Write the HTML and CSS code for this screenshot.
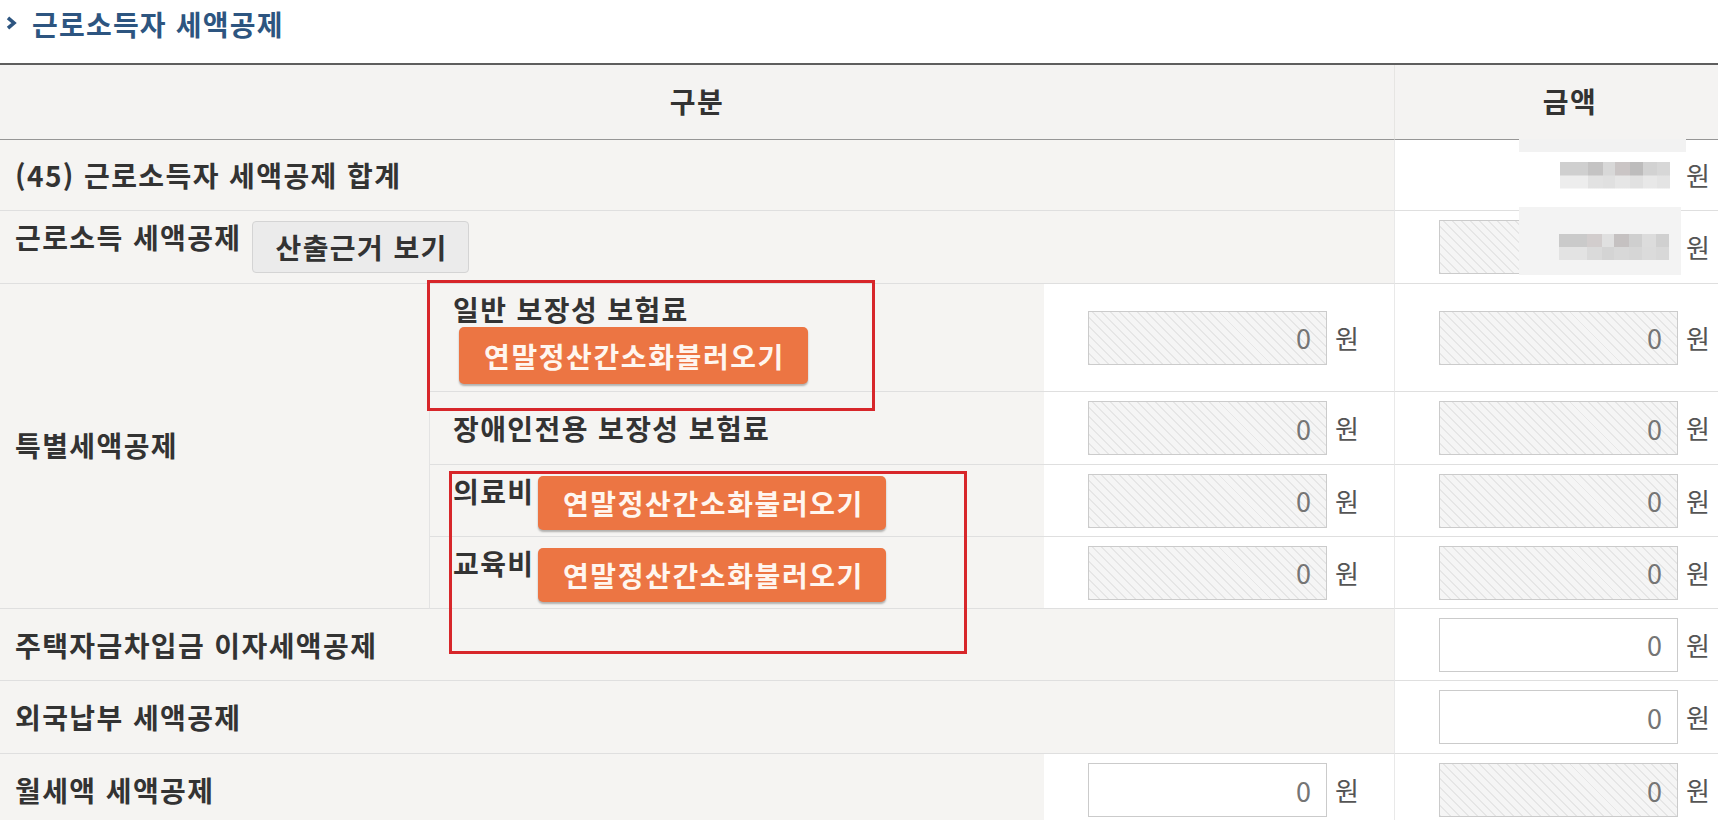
FILE: index.html
```html
<!DOCTYPE html>
<html lang="ko">
<head>
<meta charset="utf-8">
<title>근로소득자 세액공제</title>
<link rel="stylesheet" href="styles.css">
</head>
<body>
<div class="page">
  <h2 class="title"><svg class="chev" width="11" height="14" viewBox="0 0 11 14"><polyline points="2,1.8 8,7 2,12.2" fill="none" stroke="#2d5580" stroke-width="3.6"/></svg>근로소득자 세액공제</h2>
  <div class="tbl-wrap">
    <div class="grid">
      <div class="th span3">구분</div>
      <div class="th col-amt">금액</div>

      <div class="td label span3">(45) 근로소득자 세액공제 합계</div>
      <div class="td amt">
        <span class="patch patch1"></span>
        <span class="mosaic mosaic1"></span>
        <span class="won">원</span>
      </div>

      <div class="td label label-top span3">
        <span class="ltext">근로소득 세액공제</span>
        <button class="btn-gray" type="button">산출근거 보기</button>
      </div>
      <div class="td amt">
        <input class="inp hatch" type="text" value="" readonly>
        <span class="won">원</span>
        <span class="patch patch2"></span>
        <span class="mosaic mosaic2 over"></span>
      </div>

      <div class="td label special">특별세액공제</div>
      <div class="td sub sub-stack">
        <span class="ltext">일반 보장성 보험료</span>
        <button class="btn-orange btn-first" type="button">연말정산간소화불러오기</button>
      </div>
      <div class="td mid"><input class="inp hatch" type="text" value="0" readonly><span class="won">원</span></div>
      <div class="td amt"><input class="inp hatch" type="text" value="0" readonly><span class="won">원</span></div>

      <div class="td sub">장애인전용 보장성 보험료</div>
      <div class="td mid"><input class="inp hatch" type="text" value="0" readonly><span class="won">원</span></div>
      <div class="td amt"><input class="inp hatch" type="text" value="0" readonly><span class="won">원</span></div>

      <div class="td sub sub-row">
        <span class="ltext">의료비</span>
        <button class="btn-orange" type="button">연말정산간소화불러오기</button>
      </div>
      <div class="td mid"><input class="inp hatch" type="text" value="0" readonly><span class="won">원</span></div>
      <div class="td amt"><input class="inp hatch" type="text" value="0" readonly><span class="won">원</span></div>

      <div class="td sub sub-row">
        <span class="ltext">교육비</span>
        <button class="btn-orange" type="button">연말정산간소화불러오기</button>
      </div>
      <div class="td mid"><input class="inp hatch" type="text" value="0" readonly><span class="won">원</span></div>
      <div class="td amt"><input class="inp hatch" type="text" value="0" readonly><span class="won">원</span></div>

      <div class="td label span3">주택자금차입금 이자세액공제</div>
      <div class="td amt"><input class="inp" type="text" value="0" readonly><span class="won">원</span></div>

      <div class="td label span3">외국납부 세액공제</div>
      <div class="td amt"><input class="inp" type="text" value="0" readonly><span class="won">원</span></div>

      <div class="td label span2">월세액 세액공제</div>
      <div class="td mid"><input class="inp" type="text" value="0" readonly><span class="won">원</span></div>
      <div class="td amt"><input class="inp hatch" type="text" value="0" readonly><span class="won">원</span></div>
    </div>
    <div class="mark mark1"></div>
    <div class="mark mark2"></div>
  </div>
</div>
</body>
</html>
```

FILE: styles.css
```css
* { box-sizing: border-box; }

html, body {
  margin: 0;
  padding: 0;
}

body {
  width: 1718px;
  height: 820px;
  overflow: hidden;
  background: #ffffff;
  font-family: "Noto Sans CJK KR", "Noto Sans", sans-serif;
  color: #333333;
}

.page {
  width: 1718px;
  overflow: hidden;
}

.title {
  margin: 0;
  height: 63px;
  display: flex;
  align-items: flex-start;
  padding: 7px 0 0 6px;
  font-size: 28px;
  line-height: 34px;
  font-weight: 700;
  letter-spacing: 1.2px;
  color: #2d5580;
}

.chev {
  margin-top: 9px;
  margin-right: 15px;
  flex: none;
}

.tbl-wrap {
  position: relative;
  width: 1745px;
}

.grid {
  display: grid;
  grid-template-columns: 430px 614px 350px 351px;
  grid-template-rows: 75px 71px 73px 108px 73px 72px 72px 72px 73px 73px;
  border-top: 2px solid #5e5e5e;
  box-shadow: inset 0 1px 0 #a8a8a8;
}

.th {
  background: #f4f3f2;
  border-bottom: 1px solid #969696;
  display: flex;
  align-items: center;
  justify-content: center;
  padding-bottom: 2px;
  font-size: 28px;
  font-weight: 700;
  letter-spacing: 1.4px;
  color: #333333;
}

.col-amt {
  border-left: 1px solid #e6e5e3;
}

.span3 { grid-column: span 3; }
.span2 { grid-column: span 2; }

.td {
  border-bottom: 1px solid #dfdfdf;
  display: flex;
  align-items: center;
  font-size: 28px;
  font-weight: 700;
  letter-spacing: 1.4px;
  color: #333333;
}

.label {
  background: #f5f4f2;
  padding-left: 15px;
}

.label-top {
  align-items: flex-start;
  padding-top: 10px;
}

.label-top .ltext {
  line-height: 32px;
}

.special {
  grid-row: span 4;
  border-right: 1px solid #e3e3e3;
  padding-bottom: 2px;
}

.sub {
  background: #f5f4f2;
  padding-left: 23px;
}

.sub-stack {
  flex-direction: column;
  align-items: flex-start;
  padding-top: 9px;
}

.sub-stack .ltext {
  line-height: 32px;
}

.sub-row {
  align-items: flex-start;
  padding-top: 11px;
}

.sub-row .ltext {
  line-height: 30px;
  margin-right: 4px;
}

.mid {
  background: #ffffff;
  justify-content: flex-end;
  padding-right: 35px;
  gap: 8px;
}

.amt {
  position: relative;
  background: #ffffff;
  border-left: 1px solid #e9e9e9;
  justify-content: flex-end;
  padding-right: 35px;
  gap: 8px;
}

.inp {
  width: 239px;
  height: 54px;
  margin: 0;
  border: 1px solid #cbcbcb;
  border-radius: 0;
  background: #ffffff;
  padding: 0 15px 0 0;
  text-align: right;
  font-family: "Noto Sans CJK KR", "Noto Sans", sans-serif;
  font-size: 27px;
  font-weight: 400;
  letter-spacing: 0;
  color: #757575;
  outline: none;
}

.hatch {
  background-color: #f3f3f3;
  background-image: repeating-linear-gradient(45deg, #e6e6e6 0 1.4px, #f5f5f5 1.4px 6.4px);
}

.won {
  font-size: 26px;
  font-weight: 400;
  letter-spacing: 0;
  color: #555555;
  line-height: 1;
}

.btn-gray {
  margin: 0 0 0 10px;
  height: 52px;
  padding: 0 20px 0 23px;
  border: 1px solid #d4d4d4;
  border-radius: 4px;
  background: #ebebeb;
  font-family: "Noto Sans CJK KR", "Noto Sans", sans-serif;
  font-size: 28px;
  font-weight: 700;
  letter-spacing: 1.4px;
  color: #333333;
  line-height: 1;
}

.btn-orange {
  width: 348px;
  height: 54px;
  margin: 0;
  padding: 0 0 0 2px;
  border: none;
  border-radius: 5px;
  background: #ec7543;
  box-shadow: 0 2px 2px rgba(0, 0, 0, 0.28);
  font-family: "Noto Sans CJK KR", "Noto Sans", sans-serif;
  font-size: 28px;
  font-weight: 700;
  letter-spacing: 1.6px;
  color: #fff6ef;
  line-height: 1;
}

.btn-first {
  margin: 2px 0 0 6px;
  width: 349px;
  height: 57px;
}

.patch {
  position: absolute;
  background: #f3f3f3;
}

.patch1 {
  left: 124px;
  top: -1px;
  width: 167px;
  height: 13px;
  background: #f2f2f2;
}

.patch2 {
  left: 124px;
  top: -4px;
  width: 162px;
  height: 68px;
}

.mosaic {
  display: block;
  width: 110px;
  height: 27px;
}

.mosaic1 {
  margin-right: 8px;
  background:
    linear-gradient(to right, #cfcfcf 0 25%, #c4c3c3 25% 39%, #d8d8d8 39% 50%, #cac5c5 50% 64%, #bdbcbc 64% 75%, #d2d2d2 75% 88%, #d7d7d7 88% 100%) top / 100% 50% no-repeat,
    linear-gradient(to right, #ededed 0 25%, #e2e2e2 25% 39%, #e0e0e0 39% 50%, #e6e6e6 50% 64%, #e1e1e1 64% 75%, #e8e8e8 75% 88%, #e4e4e4 88% 100%) bottom / 100% 50% no-repeat;
}

.mosaic2 {
  background:
    linear-gradient(to right, #cacaca 0 25%, #d2cdcd 25% 39%, #e0e0e0 39% 50%, #c5c1c1 50% 64%, #cfcfcf 64% 75%, #dcdcdc 75% 88%, #d0d0d0 88% 100%) top / 100% 50% no-repeat,
    linear-gradient(to right, #e3e3e3 0 25%, #dadada 25% 39%, #d4d4d4 39% 50%, #d8d8d8 50% 64%, #d6d6d6 64% 75%, #dbdbdb 75% 88%, #d8d8d8 88% 100%) bottom / 100% 50% no-repeat;
}

.over {
  position: absolute;
  left: 164px;
  top: 23px;
  height: 26px;
}

.mark {
  position: absolute;
  border: 3px solid #d7262a;
  pointer-events: none;
}

.mark1 {
  left: 427px;
  top: 217px;
  width: 448px;
  height: 131px;
}

.mark2 {
  left: 449px;
  top: 408px;
  width: 518px;
  height: 183px;
}
```
